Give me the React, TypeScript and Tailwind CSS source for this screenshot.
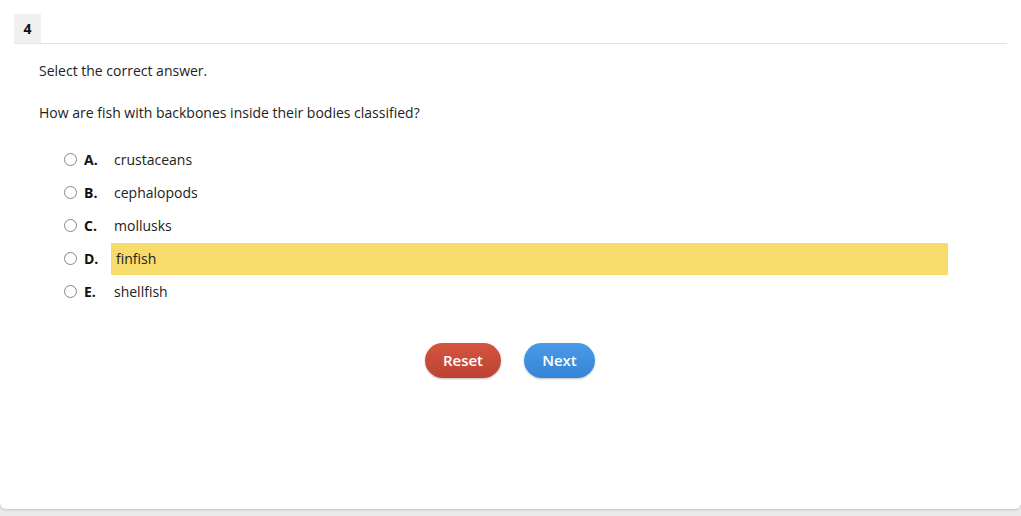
const options = [
  { letter: 'A.', text: 'crustaceans' },
  { letter: 'B.', text: 'cephalopods' },
  { letter: 'C.', text: 'mollusks' },
  { letter: 'D.', text: 'finfish', highlight: true },
  { letter: 'E.', text: 'shellfish' },
];

export default function App() {
  return (
    <div className="h-[516px] w-full bg-[#e9e9e9] overflow-hidden" style={{ fontFamily: '"Open Sans", sans-serif' }}>
      <div className="h-[509px] bg-white rounded-b-[6px] shadow-[0_1px_2px_rgba(0,0,0,0.15)] text-[14px] text-[#222]">
        {/* Question number header */}
        <div className="pt-[14px] pl-[14px] pr-[14px]">
          <div className="flex border-b border-[#e4e4e4]">
            <div className="w-[27px] h-[29px] bg-[#f0f0f0] flex items-center justify-center font-bold text-[#111]">4</div>
          </div>
        </div>

        {/* Body */}
        <div className="pl-[39px]">
          <p className="mt-[17px] leading-[20px]">Select the correct answer.</p>
          <p className="mt-[22px] leading-[20px]">How are fish with backbones inside their bodies classified?</p>

          <div className="mt-[20px] pl-[25px]">
            {options.map((o) => (
              <div key={o.letter} className="flex items-center h-[33px]">
                <span className="w-[13px] h-[13px] rounded-full border border-[#858585] bg-white shrink-0" />
                <span className="ml-[7px] w-[27px] font-bold text-[#111]">{o.letter}</span>
                <span
                  className={
                    o.highlight
                      ? 'w-[837px] h-[32px] flex items-center pl-[5px] bg-[#f7dc6b]'
                      : 'w-[837px] h-[32px] flex items-center pl-[3px]'
                  }
                >
                  {o.text}
                </span>
              </div>
            ))}
          </div>
        </div>

        {/* Buttons */}
        <div className="mt-[35px] flex justify-center gap-[23px] pr-[1px]">
          <button className="w-[76px] h-[35px] rounded-full text-white text-[15px] font-semibold bg-gradient-to-b from-[#d4553f] to-[#bd4233] shadow-[0_1px_2px_rgba(0,0,0,0.25)]">
            Reset
          </button>
          <button className="w-[71px] h-[35px] rounded-full text-white text-[15px] font-semibold bg-gradient-to-b from-[#4a9be6] to-[#3584d8] shadow-[0_1px_2px_rgba(0,0,0,0.25)]">
            Next
          </button>
        </div>
      </div>
    </div>
  );
}
